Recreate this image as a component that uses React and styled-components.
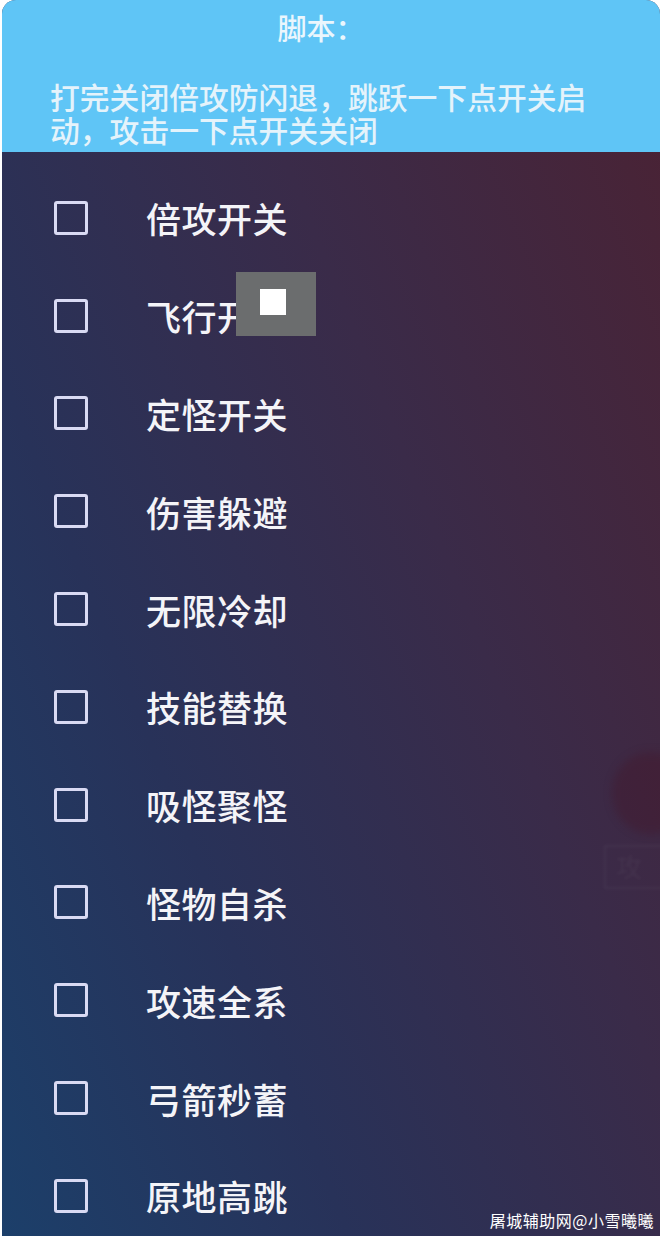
import React from 'react';
import styled, { createGlobalStyle } from 'styled-components';

const GlobalStyle = createGlobalStyle`
  html, body {
    margin: 0;
    padding: 0;
    background: #ffffff;
  }
  body {
    font-family: "Noto Sans CJK SC", "Noto Sans", sans-serif;
  }
`;

const Panel = styled.div`
  position: relative;
  margin: 0 2px;
  height: 1236px;
  overflow: hidden;
  border-radius: 14px 14px 0 0;
  background: linear-gradient(68deg, #1c3f6a 0%, #283259 30%, #3a2b49 62%, #4b2233 100%);
  display: flex;
  flex-direction: column;
`;

const Header = styled.div`
  height: 152px;
  flex-shrink: 0;
  background: #5fc5f6;
  box-sizing: border-box;
  padding: 7px 46px 0 48px;
  display: flex;
  flex-direction: column;
`;

const Title = styled.div`
  text-align: center;
  color: #eaf6fd;
  font-size: 29px;
  font-weight: 500;
  line-height: 40px;
  padding-right: 22px;
`;

const Desc = styled.div`
  margin-top: 33px;
  max-width: 565px;
  color: #e4f3fb;
  font-size: 29.8px;
  font-weight: 500;
  line-height: 33px;
`;

const List = styled.div`
  padding-top: 17px;
  display: flex;
  flex-direction: column;
`;

const Row = styled.label`
  height: 97.8px;
  flex-shrink: 0;
  display: flex;
  align-items: center;
  padding-left: 52px;
`;

const Box = styled.span`
  width: 34px;
  height: 34px;
  box-sizing: border-box;
  border: 3px solid #d9daf3;
  border-radius: 3px;
  flex-shrink: 0;
`;

const Label = styled.span`
  margin-left: 58px;
  color: #f4f4f8;
  font-size: 35px;
  font-weight: 500;
  letter-spacing: 0.5px;
`;

// small floating toggle button left over the list
const FloatButton = styled.div`
  position: absolute;
  left: 234px;
  top: 272px;
  width: 80px;
  height: 64px;
  background: #6b6d6e;
  display: flex;
  align-items: center;
  justify-content: center;
  padding-right: 6px;
  box-sizing: border-box;
`;

const FloatDot = styled.span`
  width: 26px;
  height: 26px;
  background: #ffffff;
  margin-bottom: 4px;
`;

// faint game controls showing through on the right edge
const GhostCircle = styled.div`
  position: absolute;
  right: -30px;
  top: 752px;
  width: 78px;
  height: 82px;
  border-radius: 50%;
  background: rgba(70, 18, 34, 0.3);
  filter: blur(4px);
`;

const GhostTag = styled.div`
  position: absolute;
  right: -4px;
  top: 845px;
  width: 60px;
  height: 44px;
  border: 2px solid rgba(255, 255, 255, 0.04);
  color: rgba(255, 255, 255, 0.04);
  font-size: 26px;
  padding-left: 10px;
  box-sizing: border-box;
  filter: blur(1.5px);
`;

const Watermark = styled.div`
  position: absolute;
  right: 6px;
  bottom: 4px;
  color: #ffffff;
  font-size: 16px;
  letter-spacing: 0.5px;
`;

const items = [
  '倍攻开关',
  '飞行开关',
  '定怪开关',
  '伤害躲避',
  '无限冷却',
  '技能替换',
  '吸怪聚怪',
  '怪物自杀',
  '攻速全系',
  '弓箭秒蓄',
  '原地高跳',
];

export default function App() {
  return (
    <>
      <GlobalStyle />
      <Panel>
        <Header>
          <Title>脚本：</Title>
          <Desc>打完关闭倍攻防闪退，跳跃一下点开关启动，攻击一下点开关关闭</Desc>
        </Header>
        <List>
          {items.map((name) => (
            <Row key={name}>
              <Box />
              <Label>{name}</Label>
            </Row>
          ))}
        </List>
        <GhostCircle />
        <GhostTag>攻</GhostTag>
        <FloatButton>
          <FloatDot />
        </FloatButton>
        <Watermark>屠城辅助网@小雪曦曦</Watermark>
      </Panel>
    </>
  );
}
